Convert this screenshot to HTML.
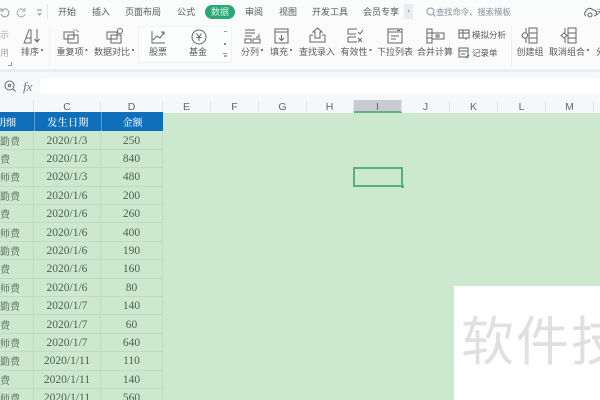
<!DOCTYPE html>
<html><head><meta charset="utf-8">
<style>
html,body{margin:0;padding:0;width:600px;height:400px;overflow:hidden;background:#f8f9fa}
#w{position:absolute;left:0;top:0;width:600px;height:400px;overflow:hidden;background:#f7f8fa;font-family:"Liberation Sans","Noto Sans CJK SC",sans-serif;color:#555;filter:blur(.35px)}
.a{position:absolute;white-space:nowrap}
.t{position:absolute;white-space:nowrap;font-size:9px;line-height:12px;color:#5a5a5a;transform:translateX(-50%)}
.m{position:absolute;white-space:nowrap;font-size:9px;line-height:12px;color:#5a5a5a;transform:translateX(-50%);top:6px}
.d{display:inline-block;width:2px;height:2px;background:#777;margin-left:2px;vertical-align:4px}
.ch{position:absolute;top:101px;height:11px;line-height:12px;font-size:10.5px;color:#666;text-align:center;width:48px;border-right:1px solid #e2e4e6;box-sizing:border-box}
.c{position:absolute;text-align:center;font-family:"Liberation Serif","Noto Serif CJK SC",serif;font-size:11.5px;color:#4f5f52;height:18.4px;line-height:18.4px;box-sizing:border-box;border-bottom:1px solid #bfdbc5;border-right:1px solid #bfdbc5}
.l{text-align:left;font-family:"Noto Serif CJK SC",serif;font-size:10px}
.h{position:absolute;top:112px;height:19px;line-height:19px;text-align:center;color:#e4f0f9;font-size:10px;font-family:'Noto Serif CJK SC',serif;font-weight:600;box-sizing:border-box}
svg{position:absolute;overflow:visible}
svg *{fill:none;stroke:#666;stroke-width:1}
</style></head><body><div id="w">

<!-- top bars -->
<div class="a" style="left:0;top:0;width:600px;height:23px;background:#fafbfb"></div>
<div class="a" style="left:0;top:23px;width:600px;height:46px;background:#fbfbfc"></div>
<div class="a" style="left:0;top:69px;width:600px;height:3px;background:#ebeff3"></div>
<div class="a" style="left:0;top:72px;width:600px;height:22px;background:#f7f8f9"></div>
<div class="a" style="left:40px;top:78px;width:560px;height:16px;background:#fff;border-radius:2px"></div>
<div class="a" style="left:0;top:94px;width:600px;height:18px;background:#f6f7f8"></div>

<!-- quick access -->
<svg style="left:0;top:7px" width="45" height="12"><path d="M2 3a4 4 0 1 1-1 4M1 1v3h3" style="stroke:#999"/><path d="M24 3a4 4 0 1 0 1 4M25 1v3h-3" style="stroke:#aaa"/><path d="M37 3h5M38 6l1.500 2 1.500-2" style="stroke:#888"/></svg>
<div class="a" style="left:47px;top:4px;width:1px;height:15px;background:#e6e7e9"></div>

<!-- tabs -->
<div class="m" style="left:67px">开始</div>
<div class="m" style="left:101px">插入</div>
<div class="m" style="left:143px">页面布局</div>
<div class="m" style="left:186px">公式</div>
<div class="a" style="left:205px;top:5px;width:30px;height:14px;border-radius:7px;background:#2aa876"></div>
<div class="m" style="left:220px;color:#d8f2e6">数据</div>
<div class="m" style="left:254px">审阅</div>
<div class="m" style="left:288px">视图</div>
<div class="m" style="left:330px">开发工具</div>
<div class="m" style="left:381px">会员专享</div>
<div class="a" style="left:404px;top:4px;width:9px;height:15px;background:#e9edf2;font-size:7px;line-height:15px;text-align:center;color:#666">›</div>
<svg style="left:426px;top:7px" width="10" height="10"><circle cx="4.500" cy="4.500" r="3.500" style="stroke:#8a99b0"/><path d="M7 7l2.500 2.500" style="stroke:#8a99b0"/></svg>
<div class="a" style="left:436px;top:6px;font-size:8.300px;line-height:12px;color:#8b8f96">查找命令、搜索模板</div>
<svg style="left:583px;top:7px" width="14" height="11"><path d="M3 9a3 3 0 0 1 0-5a4 4 0 0 1 7-1a3 3 0 0 1 1 6"/><circle cx="7" cy="8" r="2"/></svg>
<div class="a" style="left:596px;top:6px;font-size:9px;line-height:12px;color:#666">未</div>

<!-- ribbon left fragment -->
<div class="a" style="left:0;top:29px;font-size:9px;line-height:12px;color:#aaa">示</div>
<div class="a" style="left:0;top:47px;font-size:9px;line-height:12px;color:#aaa">用</div>
<div class="a" style="left:8px;top:62px;width:3px;height:3px;border-right:1px solid #999;border-bottom:1px solid #999"></div>

<!-- sort -->
<svg style="left:23px;top:28px" width="18" height="16"><path d="M1 15L6 2h2v13H1zM3 10h5"/><path d="M14 1v13M11.500 11l2.500 3 2.500-3"/></svg>
<div class="t" style="left:32px;top:46px">排序<i class="d"></i></div>
<div class="a" style="left:49px;top:27px;width:1px;height:40px;background:#eef0f2"></div>

<!-- duplicates -->
<svg style="left:63px;top:28px" width="18" height="16"><rect x="1" y="4" width="10" height="7"/><rect x="5" y="7" width="10" height="8"/><path d="M13 1l1 2M16 3l-2 1M11 1v2" style="stroke:#999"/></svg>
<div class="t" style="left:72px;top:46px">重复项<i class="d"></i></div>
<svg style="left:106px;top:28px" width="18" height="16"><rect x="1" y="4" width="10" height="7"/><rect x="5" y="7" width="10" height="8"/><circle cx="14" cy="3" r="2.500"/></svg>
<div class="t" style="left:114px;top:46px">数据对比<i class="d"></i></div>

<!-- panel -->
<div class="a" style="left:138px;top:26px;width:92px;height:35px;background:#fcfdfd;border:1px solid #f0f1f3;border-radius:2px"></div>
<svg style="left:151px;top:30px" width="15" height="14"><path d="M1 1v12h13"/><path d="M2 10l4-4 3 2 4-6M10 2h3v3"/></svg>
<div class="t" style="left:158px;top:46px">股票</div>
<svg style="left:191px;top:29px" width="16" height="16"><circle cx="8" cy="8" r="7"/><path d="M5.500 4.500L8 8l2.500-3.500M8 8v4M5.500 8.500h5"/></svg>
<div class="t" style="left:198px;top:46px">基金</div>
<div class="a" style="left:224px;top:31px;width:3px;height:1px;background:#999"></div>
<div class="a" style="left:224px;top:43px;width:2px;height:2px;background:#888"></div>
<div class="a" style="left:223px;top:53px;width:4px;height:1px;background:#999"></div>
<div class="a" style="left:224px;top:55px;width:3px;height:2px;background:#aaa"></div>

<!-- split/fill -->
<svg style="left:244px;top:28px" width="17" height="16"><path d="M1 2h10M1 5h10M1 8h7M15 6v3h-3"/><rect x="1" y="11" width="6" height="4"/><rect x="9" y="11" width="7" height="4"/></svg>
<div class="t" style="left:252px;top:46px">分列<i class="d"></i></div>
<svg style="left:274px;top:28px" width="15" height="16"><rect x="1" y="1" width="13" height="14"/><path d="M1 4h13M7.500 7v5M5 10l2.500 2.500L10 10"/></svg>
<div class="t" style="left:281px;top:46px">填充<i class="d"></i></div>
<div class="t" style="left:317px;top:46px">查找录入</div>
<svg style="left:309px;top:27px" width="18" height="17"><path d="M1 8h3M13 8h3M1 8v7h15V8" /><path d="M6 11V5H4l4.500-4L13 5h-2v6H6z"/></svg>
<svg style="left:347px;top:28px" width="17" height="16"><path d="M1 1h9M1 1v5h8M1 9h8M1 9v5h9"/><path d="M11 4l2 2 3-4M11 10l4 4M15 10l-4 4"/></svg>
<div class="t" style="left:356px;top:46px">有效性<i class="d"></i></div>
<svg style="left:387px;top:28px" width="16" height="16"><rect x="1" y="1" width="14" height="14"/><path d="M1 4h14M4 8h8M4 11h5M10 2.500h3"/></svg>
<div class="t" style="left:395px;top:46px">下拉列表</div>
<svg style="left:426px;top:28px" width="19" height="16"><rect x="1" y="1" width="5" height="14"/><path d="M1 5h5M1 10h5"/><path d="M6 5h12v6H6"/><rect x="10" y="7" width="3" height="2"/></svg>
<div class="t" style="left:435px;top:46px">合并计算</div>
<svg style="left:458px;top:29px" width="12" height="11"><rect x="1" y="1" width="10" height="8"/><path d="M1 4h10M5 1v8M8 9v2"/></svg>
<div class="a" style="left:472px;top:29px;font-size:8.500px;line-height:12px;color:#5a5a5a">模拟分析</div>
<svg style="left:458px;top:47px" width="12" height="12"><rect x="1" y="1" width="9" height="9"/><path d="M1 4h9M3 7h4"/><path d="M8 11l3-3" style="stroke:#3a8f6a;stroke-width:1.500"/></svg>
<div class="a" style="left:472px;top:47px;font-size:8.500px;line-height:12px;color:#5a5a5a">记录单</div>
<div class="a" style="left:511px;top:27px;width:1px;height:40px;background:#eef0f2"></div>

<!-- groups -->
<svg style="left:521px;top:27px" width="18" height="17"><rect x="8" y="1" width="8" height="15"/><path d="M8 6h8M8 11h8M5 1v5M5 11v5"/><circle cx="4" cy="8.500" r="2.700"/></svg>
<div class="t" style="left:530px;top:46px">创建组</div>
<svg style="left:560px;top:27px" width="18" height="17"><rect x="8" y="1" width="8" height="15"/><path d="M8 6h8M8 11h8M5 1v5M5 11v5"/><path d="M4 6l3 2.500L4 11 1 8.500z"/></svg>
<div class="t" style="left:569px;top:46px">取消组合<i class="d"></i></div>
<div class="a" style="left:596px;top:46px;font-size:9px;line-height:12px;color:#555">分</div>

<!-- formula bar -->
<svg style="left:4px;top:80px" width="12" height="12"><circle cx="5.500" cy="5.500" r="4.500"/><circle cx="5.500" cy="5.500" r="1.200"/><path d="M9 9l2.500 2.500"/></svg>
<div class="a" style="left:23px;top:79px;font-family:'Liberation Serif',serif;font-style:italic;font-size:13px;line-height:15px;color:#777">fx</div>

<!-- column headers -->
<div class="a" style="left:33px;top:100px;width:1px;height:12px;background:#e2e4e6"></div>
<div class="ch" style="left:34px;width:67px">C</div>
<div class="ch" style="left:101px;width:62px">D</div>
<div class="ch" style="left:163px">E</div>
<div class="ch" style="left:211px">F</div>
<div class="ch" style="left:259px">G</div>
<div class="ch" style="left:306px">H</div>
<div class="a" style="left:354px;top:100px;width:48px;height:12px;background:#c8ccd2"></div>
<div class="a" style="left:354px;top:111px;width:48px;height:2px;background:#5fb48a"></div>
<div class="ch" style="left:354px;color:#666">I</div>
<div class="ch" style="left:402px">J</div>
<div class="ch" style="left:450px">K</div>
<div class="ch" style="left:498px">L</div>
<div class="ch" style="left:546px">M</div>

<!-- sheet -->
<div class="a" style="left:0;top:113px;width:600px;height:287px;background:#cce8cf"></div>
<div class="a" style="left:0;top:112px;width:163px;height:19px;background:#0f6fbb"></div>
<div class="h" style="left:-4px;width:37px;text-align:left">明细</div>
<div class="h" style="left:34px;width:67px;letter-spacing:.4px;border-left:1px solid #5a9fd2">发生日期</div>
<div class="h" style="left:101px;width:62px;border-left:1px solid #5a9fd2">金额</div>

<!-- rows -->
<div class="c l" style="left:0;top:131.500px;width:34px">勤费</div><div class="c" style="left:34px;top:131.500px;width:67px">2020/1/3</div><div class="c" style="left:101px;top:131.500px;width:62px">250</div>
<div class="c l" style="left:0;top:149.900px;width:34px">费</div><div class="c" style="left:34px;top:149.900px;width:67px">2020/1/3</div><div class="c" style="left:101px;top:149.900px;width:62px">840</div>
<div class="c l" style="left:0;top:168.300px;width:34px">师费</div><div class="c" style="left:34px;top:168.300px;width:67px">2020/1/3</div><div class="c" style="left:101px;top:168.300px;width:62px">480</div>
<div class="c l" style="left:0;top:186.700px;width:34px">勤费</div><div class="c" style="left:34px;top:186.700px;width:67px">2020/1/6</div><div class="c" style="left:101px;top:186.700px;width:62px">200</div>
<div class="c l" style="left:0;top:205.100px;width:34px">费</div><div class="c" style="left:34px;top:205.100px;width:67px">2020/1/6</div><div class="c" style="left:101px;top:205.100px;width:62px">260</div>
<div class="c l" style="left:0;top:223.500px;width:34px">师费</div><div class="c" style="left:34px;top:223.500px;width:67px">2020/1/6</div><div class="c" style="left:101px;top:223.500px;width:62px">400</div>
<div class="c l" style="left:0;top:241.900px;width:34px">勤费</div><div class="c" style="left:34px;top:241.900px;width:67px">2020/1/6</div><div class="c" style="left:101px;top:241.900px;width:62px">190</div>
<div class="c l" style="left:0;top:260.300px;width:34px">费</div><div class="c" style="left:34px;top:260.300px;width:67px">2020/1/6</div><div class="c" style="left:101px;top:260.300px;width:62px">160</div>
<div class="c l" style="left:0;top:278.700px;width:34px">师费</div><div class="c" style="left:34px;top:278.700px;width:67px">2020/1/6</div><div class="c" style="left:101px;top:278.700px;width:62px">80</div>
<div class="c l" style="left:0;top:297.100px;width:34px">勤费</div><div class="c" style="left:34px;top:297.100px;width:67px">2020/1/7</div><div class="c" style="left:101px;top:297.100px;width:62px">140</div>
<div class="c l" style="left:0;top:315.500px;width:34px">费</div><div class="c" style="left:34px;top:315.500px;width:67px">2020/1/7</div><div class="c" style="left:101px;top:315.500px;width:62px">60</div>
<div class="c l" style="left:0;top:333.900px;width:34px">师费</div><div class="c" style="left:34px;top:333.900px;width:67px">2020/1/7</div><div class="c" style="left:101px;top:333.900px;width:62px">640</div>
<div class="c l" style="left:0;top:352.300px;width:34px">勤费</div><div class="c" style="left:34px;top:352.300px;width:67px">2020/1/11</div><div class="c" style="left:101px;top:352.300px;width:62px">110</div>
<div class="c l" style="left:0;top:370.700px;width:34px">费</div><div class="c" style="left:34px;top:370.700px;width:67px">2020/1/11</div><div class="c" style="left:101px;top:370.700px;width:62px">140</div>
<div class="c l" style="left:0;top:389.100px;width:34px">师费</div><div class="c" style="left:34px;top:389.100px;width:67px">2020/1/11</div><div class="c" style="left:101px;top:389.100px;width:62px">560</div>

<!-- selected cell -->
<div class="a" style="left:353px;top:167px;width:50px;height:20px;box-sizing:border-box;border:2px solid #58ae82"></div>
<div class="a" style="left:401px;top:185px;width:3px;height:3px;background:#58ae82"></div>

<!-- watermark -->
<div class="a" style="left:454px;top:286px;width:146px;height:114px;background:#fff"></div>
<div class="a" style="left:461px;top:313px;font-size:53px;line-height:60px;letter-spacing:2px;color:#e0e0e0;font-family:'Liberation Sans','Noto Sans CJK SC',sans-serif">软件技</div>

</div></body></html>
